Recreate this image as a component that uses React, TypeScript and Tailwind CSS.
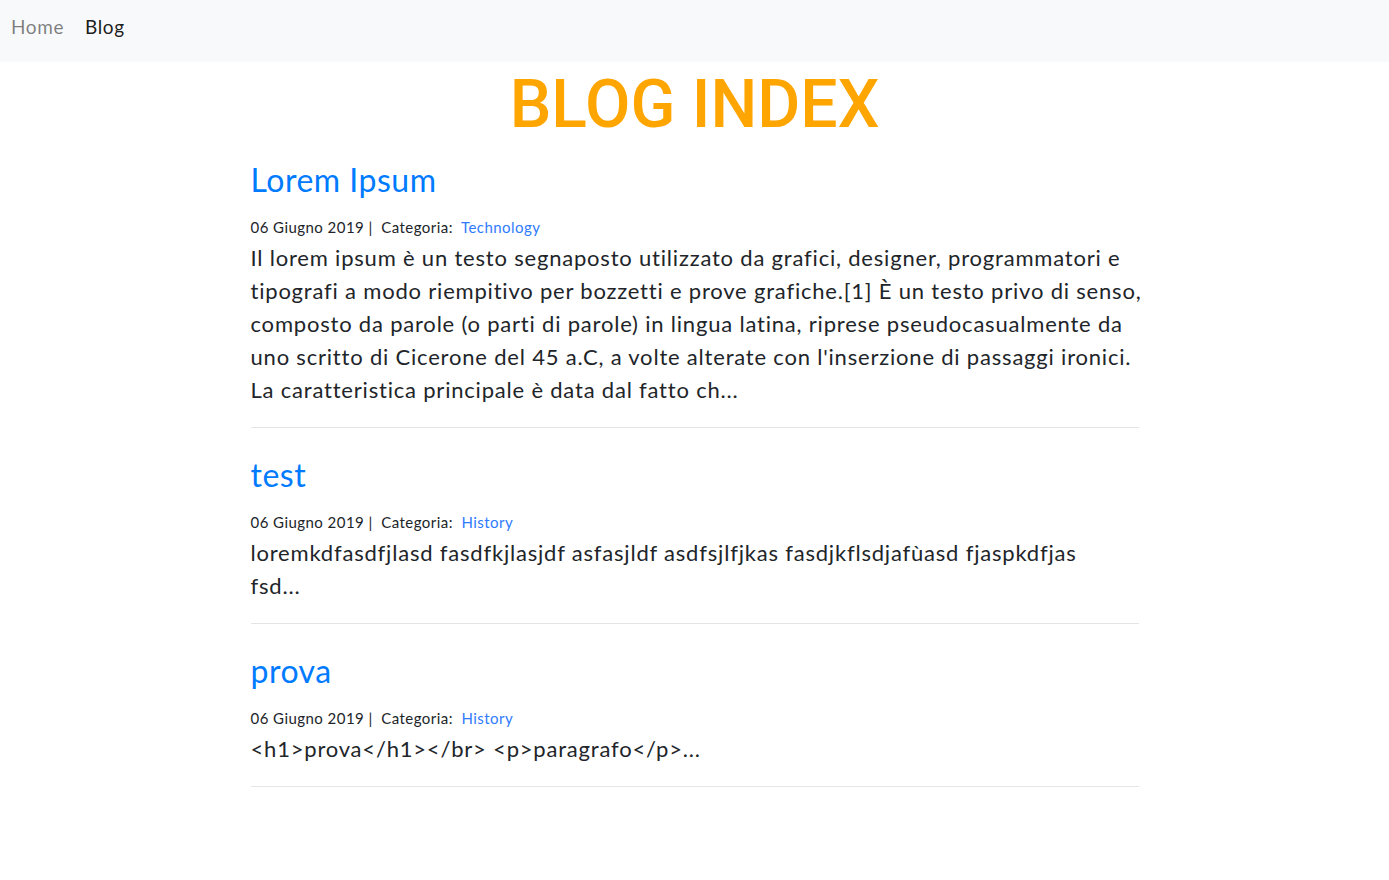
const posts = [
  {
    title: "Lorem Ipsum",
    category: "Technology",
    lines: [
      "Il lorem ipsum è un testo segnaposto utilizzato da grafici, designer, programmatori e",
      "tipografi a modo riempitivo per bozzetti e prove grafiche.[1] È un testo privo di senso,",
      "composto da parole (o parti di parole) in lingua latina, riprese pseudocasualmente da",
      "uno scritto di Cicerone del 45 a.C, a volte alterate con l'inserzione di passaggi ironici.",
      "La caratteristica principale è data dal fatto ch...",
    ],
  },
  {
    title: "test",
    category: "History",
    lines: [
      "loremkdfasdfjlasd fasdfkjlasjdf asfasjldf asdfsjlfjkas fasdjkflsdjafùasd fjaspkdfjas",
      "fsd...",
    ],
  },
  {
    title: "prova",
    category: "History",
    lines: ["<h1>prova</h1></br> <p>paragrafo</p>..."],
  },
];

export default function App() {
  return (
    <div className="min-h-screen bg-white font-['Lato',sans-serif] text-[#212529] [font-variant-ligatures:none]">
      <nav className="flex h-[62px] items-center gap-[21px] bg-[#f8f9fa] px-[11px] pb-[8px] text-[19px] tracking-[0.6px]">
        <a href="#" className="text-black/50">Home</a>
        <a href="#" className="text-black/90">Blog</a>
      </nav>

      <div className="mx-auto w-[888px]">
        <h1 className="mt-[10px] text-center font-['Roboto',sans-serif] text-[66px] font-medium leading-none text-[#ffa500]">
          BLOG INDEX
        </h1>

        <div className="mt-[23px]">
          {posts.map((p) => (
            <div key={p.title}>
              <h2 className="text-[32px] leading-[38px] tracking-[0.5px] text-[#007bff]">
                <a href="#">{p.title}</a>
              </h2>
              <div className="mt-[17px] text-[15px] leading-[22px] tracking-[0.45px]">
                06 Giugno 2019 |&nbsp; Categoria:&nbsp;{" "}
                <a href="#" className="text-[#2f7bff]">{p.category}</a>
              </div>
              <p className="mt-[3px] whitespace-nowrap text-[22px] leading-[33px] tracking-[0.8px]">
                {p.lines.map((l, i) => (
                  <span key={i} className="block">{l}</span>
                ))}
              </p>
              <hr className="mb-[28px] mt-[21px] border-black/10" />
            </div>
          ))}
        </div>
      </div>
    </div>
  );
}
